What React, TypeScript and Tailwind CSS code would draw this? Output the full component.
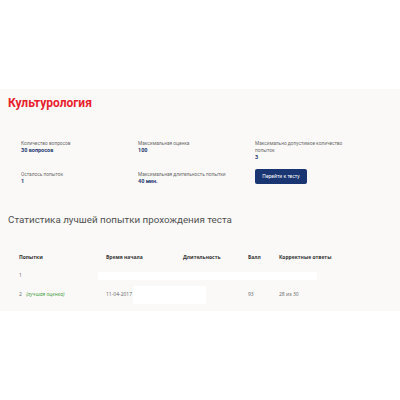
const INFO = [
  { label: "Количество вопросов", value: "30 вопросов" },
  { label: "Максимальная оценка", value: "100" },
  { label: "Максимально допустимое количество попыток", value: "3" },
  { label: "Осталось попыток", value: "1" },
  { label: "Максимальная длительность попытки", value: "40 мин." },
];

function Info({ label, value }: { label: string; value: string }) {
  return (
    <div className="w-[95px]">
      <div className="text-[4.8px] leading-[7px] text-[#6b6b6b]">{label}</div>
      <div className="text-[5.5px] leading-[7px] font-bold text-[#1f3a70]">{value}</div>
    </div>
  );
}

export default function App() {
  return (
    <div className="w-[400px] h-[400px] bg-white" style={{ fontFamily: "Roboto, 'Noto Sans', sans-serif" }}>
      <div className="h-[89px]" />
      <div className="h-[222px] bg-[#faf9f8] pt-[4px]">
        <h1 className="pl-[8px] text-[12px] leading-[20px] font-bold text-[#e8202c]">Культурология</h1>

        <div className="mt-[27px] grid grid-cols-[117px_117px_1fr] gap-y-[10px] pl-[21px] leading-none">
          <Info {...INFO[0]} />
          <Info {...INFO[1]} />
          <Info {...INFO[2]} />
          <Info {...INFO[3]} />
          <Info {...INFO[4]} />
          <div className="flex">
            <button className="-mt-[2px] block h-[15px] w-[52px] rounded-[2px] bg-[#1a3672] text-[5px] leading-none text-white">
              Перейти к тесту
            </button>
          </div>
        </div>

        <h2 className="mt-[28px] pl-[8px] text-[9.8px] leading-[14px] text-[#505050]">
          Статистика лучшей попытки прохождения теста
        </h2>

        <div className="mt-[26px] text-[5px] text-[#666]" style={{ fontFamily: "'Open Sans', sans-serif" }}>
          <div className="grid h-[10px] grid-cols-[87px_77px_65px_31px_1fr] items-center pl-[19px] font-bold text-[#333]">
            <div>Попытки</div>
            <div>Время начала</div>
            <div>Длительность</div>
            <div>Балл</div>
            <div>Корректные ответы</div>
          </div>
          <div className="mt-[9px] grid h-[8px] grid-cols-[79px_219px] items-center pl-[19px]">
            <div>1</div>
            <div className="h-[8px] bg-white" />
          </div>
          <div className="mt-[6px] grid h-[18px] grid-cols-[87px_27px_73px_42px_31px_1fr] items-center pl-[19px]">
            <div>
              2 <span className="ml-[3px] italic text-[#3a9a3a]">(лучшая оценка)</span>
            </div>
            <div>11-04-2017</div>
            <div className="h-[18px] bg-white" />
            <div />
            <div>93</div>
            <div>28 из 30</div>
          </div>
        </div>
      </div>
    </div>
  );
}
